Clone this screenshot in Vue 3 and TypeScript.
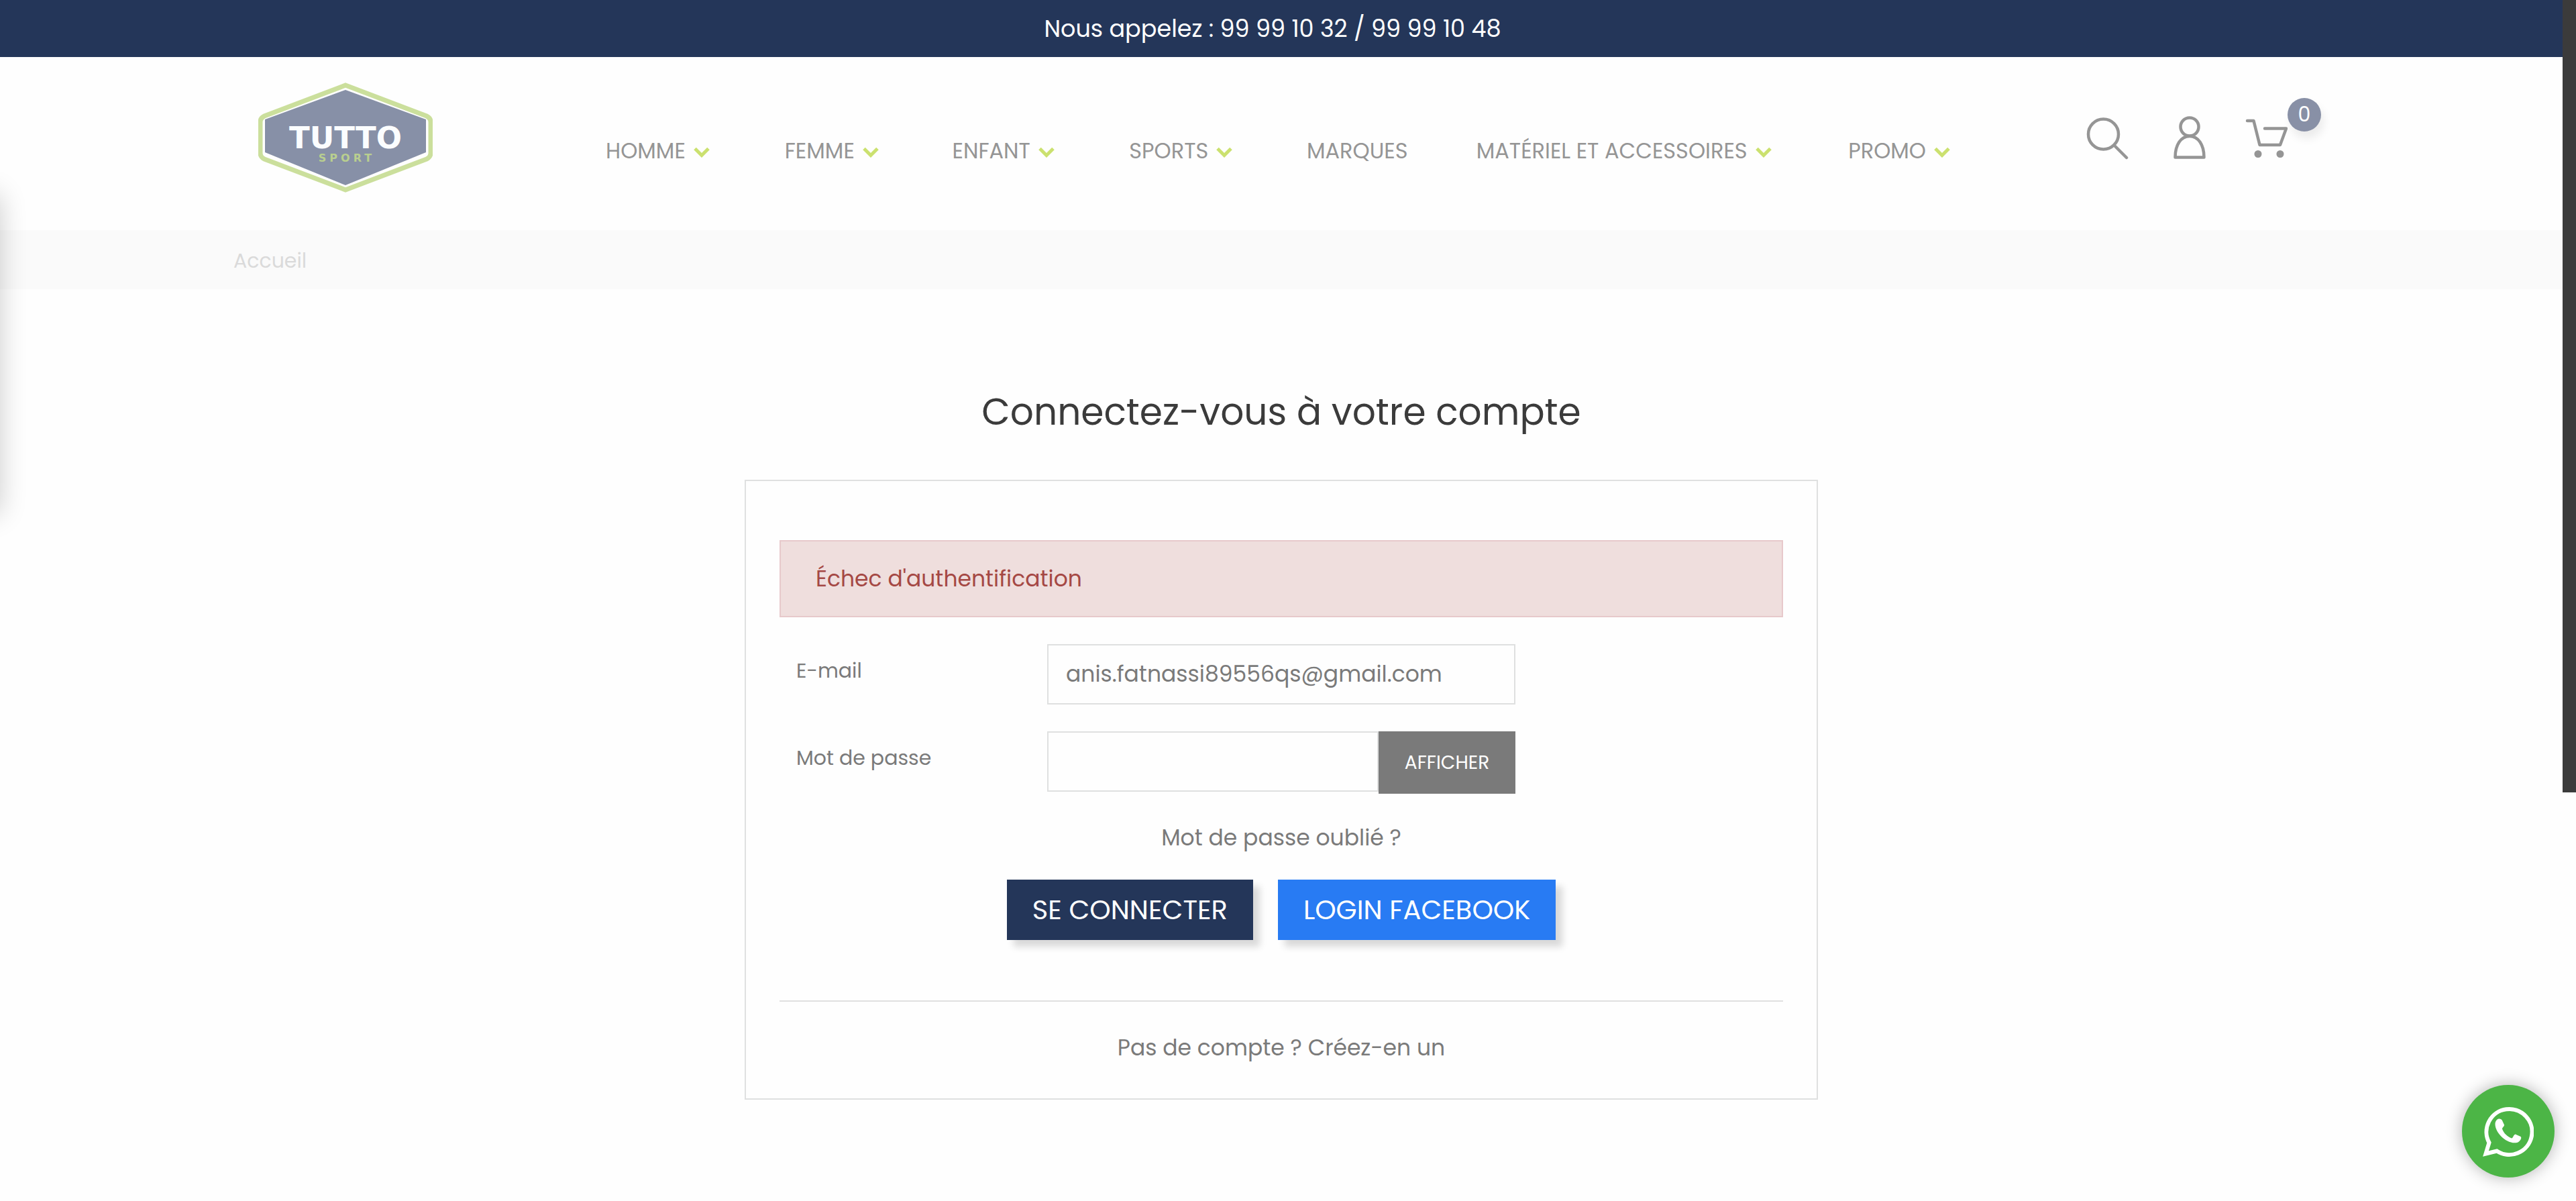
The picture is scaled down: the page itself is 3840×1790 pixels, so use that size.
<script setup lang="ts">
import { ref } from 'vue'

interface NavItem {
  label: string
  hasMenu: boolean
}

const navItems: NavItem[] = [
  { label: 'HOMME', hasMenu: true },
  { label: 'FEMME', hasMenu: true },
  { label: 'ENFANT', hasMenu: true },
  { label: 'SPORTS', hasMenu: true },
  { label: 'MARQUES', hasMenu: false },
  { label: 'MATÉRIEL ET ACCESSOIRES', hasMenu: true },
  { label: 'PROMO', hasMenu: true },
]

const email = ref('anis.fatnassi89556qs@gmail.com')
const password = ref('')
const passwordVisible = ref(false)
const cartCount = ref(0)
</script>

<template>
  <div class="page">
    <div class="topbar">Nous appelez : 99 99 10 32 / 99 99 10 48</div>

    <header class="header">
      <div class="container header-inner">
        <a href="#" class="logo" aria-label="Tutto Sport">
          <svg viewBox="0 0 260 164">
            <path d="M130 4 L251 50 Q257 53 257 59 V105 Q257 111 251 114 L130 160 L9 114 Q3 111 3 105 V59 Q3 53 9 50 Z" fill="#fefefe" stroke="#cbdf9c" stroke-width="7" />
            <path d="M130 11 L250 55 V104 L130 153 L10 104 V55 Z" fill="#8790a7" />
            <text x="130" y="98" class="logo-name">TUTTO</text>
            <text x="132" y="118" class="logo-sub">SPORT</text>
          </svg>
        </a>

        <nav class="nav">
          <a v-for="item in navItems" :key="item.label" href="#" class="nav-link">
            {{ item.label }}
            <svg v-if="item.hasMenu" class="chevron" viewBox="0 0 24 16">
              <path d="M2 2.500 L12 12.500 L22 2.500" />
            </svg>
          </a>
        </nav>

        <div class="tools">
          <button type="button" class="tool" aria-label="Rechercher">
            <svg viewBox="0 0 64 66">
              <circle cx="25.500" cy="28" r="22.500" />
              <path d="M41.500 44.500 L60 63" />
            </svg>
          </button>
          <button type="button" class="tool" aria-label="Mon compte">
            <svg viewBox="0 0 64 66">
              <circle cx="36" cy="17" r="13.500" />
              <path d="M14.500 62.500 C14.500 44 23 31 36 31 C49 31 57.500 44 57.500 62.500 Z" />
            </svg>
          </button>
          <button type="button" class="tool" aria-label="Panier">
            <svg viewBox="0 0 64 66">
              <path d="M4 8 H13.500 L22.500 44 H53 L62 19.500 H30" />
              <circle class="wheel" cx="20" cy="57.500" r="5.500" />
              <circle class="wheel" cx="53" cy="57.500" r="5.500" />
            </svg>
            <span class="badge">{{ cartCount }}</span>
          </button>
        </div>
      </div>
    </header>

    <div class="breadcrumb">
      <div class="container"><a href="#">Accueil</a></div>
    </div>

    <main class="main">
      <h1 class="title">Connectez-vous à votre compte</h1>
      <section class="card">
        <div class="alert" role="alert">Échec d'authentification</div>
        <form @submit.prevent>
          <div class="row">
            <label for="email">E-mail</label>
            <div class="field">
              <input id="email" v-model="email" type="email" />
            </div>
          </div>
          <div class="row">
            <label for="password">Mot de passe</label>
            <div class="field">
              <input id="password" v-model="password" :type="passwordVisible ? 'text' : 'password'" />
              <button type="button" class="reveal" @click="passwordVisible = !passwordVisible">AFFICHER</button>
            </div>
          </div>
          <p class="forgot"><a href="#">Mot de passe oublié ?</a></p>
          <div class="actions">
            <button type="submit" class="btn btn-primary">SE CONNECTER</button>
            <button type="button" class="btn btn-facebook">LOGIN FACEBOOK</button>
          </div>
        </form>
        <hr class="rule" />
        <p class="register"><a href="#">Pas de compte ? Créez-en un</a></p>
      </section>
    </main>

    <div class="drawer-edge"></div>
    <div class="scroll-thumb"></div>

    <a href="#" class="whatsapp" aria-label="WhatsApp">
      <svg viewBox="0 0 76 76">
        <path class="bubble" d="M9.500 55 A34 34 0 1 1 21 67.500 L4.500 71.500 Z" />
        <path class="phone" d="M21 21 C24 18.500 28 19.500 29 22 L32 28.500 C32.500 30.500 29 32.500 29 34.500 C31 41 37 46 43 48.500 C45 48.500 46 43 48.500 42.500 L56.500 46 C59 48 55 54 51 55 C36 58 18 40 18.500 27 C18.500 24.500 19.500 22.500 21 21 Z" />
      </svg>
    </a>
  </div>
</template>

<style>
body {
  margin: 0;
  background: #fefefe;
}
</style>

<style scoped>
.page {
  box-sizing: border-box;
  min-height: 100vh;
  padding-right: 20px;
  overflow: hidden;
  background: #fefefe;
  color: #7a7a7a;
  font-family: Poppins, Inter, "Liberation Sans", sans-serif;
  font-size: 33px;
  font-weight: 400;
  line-height: 40px;
}

.page * {
  box-sizing: border-box;
}

a {
  color: inherit;
  text-decoration: none;
}

button,
input {
  margin: 0;
  border: 0;
  border-radius: 0;
  font: inherit;
}

button {
  padding: 0;
  cursor: pointer;
}

.container {
  width: 90%;
  max-width: 3124px;
  margin: 0 auto;
}

.topbar {
  height: 85px;
  padding-right: 26px;
  background: #243659;
  color: #fff;
  font-size: 35px;
  line-height: 85px;
  text-align: center;
}

.header-inner {
  display: flex;
  align-items: center;
  height: 258px;
  padding: 0 62px 19px 37px;
}

.logo {
  display: block;
  flex: none;
  width: 260px;
  margin-right: 258px;
}

.logo svg {
  display: block;
  width: 100%;
}

.logo-name {
  fill: #fbfdff;
  font: bold 45px "DejaVu Sans", sans-serif;
  text-anchor: middle;
}

.logo-sub {
  fill: #b9cf8f;
  font: bold 16px "DejaVu Sans", sans-serif;
  letter-spacing: 5px;
  text-anchor: middle;
}

.nav {
  display: grid;
  flex: 0 1 2004px;
  grid-template-columns: 267fr 250fr 264fr 265fr 253fr 555fr 150fr;
  padding-top: 40px;
  color: #959595;
}

.nav-link {
  display: flex;
  align-items: center;
  gap: 12px;
  font-size: 32px;
  white-space: nowrap;
}

.chevron {
  width: 24px;
  height: 16px;
  margin-top: 4px;
  fill: none;
  stroke: #cbe16f;
  stroke-width: 5;
}

.tools {
  display: flex;
  gap: 54px;
  margin-left: auto;
}

.tool {
  position: relative;
  width: 64px;
  height: 66px;
  background: none;
}

.tool svg {
  display: block;
  width: 64px;
  height: 66px;
  fill: none;
  stroke: #959595;
  stroke-width: 4.5;
  stroke-linecap: round;
  stroke-linejoin: round;
}

.tool .wheel {
  fill: #959595;
  stroke: none;
}

.badge {
  position: absolute;
  top: -26px;
  left: 64px;
  width: 50px;
  height: 50px;
  border-radius: 50%;
  background: #8890a6;
  box-shadow: 4px 10px 14px rgba(0, 0, 0, 0.08);
  color: #fff;
  font-size: 30px;
  line-height: 50px;
  text-align: center;
}

.breadcrumb {
  padding: 26px 0 22px;
  background: #fafafa;
  color: #dadada;
  font-size: 30px;
}

.main {
  padding: 143px 40px 60px;
}

.title {
  margin: 0 0 61px;
  color: #3b3b3b;
  font-size: 55px;
  font-weight: 400;
  line-height: 80px;
  text-align: center;
}

.card {
  max-width: 1600px;
  margin: 0 auto;
  padding: 88px 50px 55px;
  border: 2px solid #dfe0e0;
}

.alert {
  margin-bottom: 40px;
  padding: 36px 52px 35px;
  border: 2px solid #e7c9cb;
  background: #efdedd;
  color: #a54844;
}

.row {
  display: grid;
  grid-template-columns: minmax(0, 1fr) minmax(0, 2fr) minmax(0, 1fr);
  margin-bottom: 40px;
}

.row label {
  padding: 20px 25px 0;
  font-size: 30px;
}

.field {
  display: flex;
  align-items: flex-start;
  margin: 0 25px;
}

.field input {
  flex: 1;
  min-width: 0;
  height: 90px;
  padding: 0 26px;
  border: 2px solid #dfe0e0;
  outline: 0;
  background: #fefefe;
  color: #7a7a7a;
}

.reveal {
  width: 204px;
  height: 93px;
  background: #7a7a7a;
  color: #fff;
  font-size: 28px;
}

.forgot {
  margin: 46px 0 42px;
  text-align: center;
}

.actions {
  display: flex;
  justify-content: center;
  gap: 37px;
}

.btn {
  height: 90px;
  padding: 0 38px;
  box-shadow: 10px 10px 10px rgba(0, 0, 0, 0.15);
  color: #fff;
  font-size: 40px;
}

.btn-primary {
  background: #243659;
}

.btn-facebook {
  background: #287bf3;
}

.rule {
  height: 2px;
  margin: 90px 0 49px;
  border: 0;
  background: #e0e0e0;
}

.register {
  margin: 0;
  text-align: center;
}

/* Closed side drawer: only its shadow reaches into the window */
.drawer-edge {
  position: fixed;
  top: 290px;
  left: -100px;
  width: 100px;
  height: 476px;
  box-shadow: 0 0 40px rgba(0, 0, 0, 0.2);
}

.scroll-thumb {
  position: fixed;
  top: 0;
  right: 0;
  width: 20px;
  height: 66%;
  background: #3b3b3b;
}

.whatsapp {
  position: fixed;
  right: 32px;
  bottom: 35px;
  display: flex;
  align-items: center;
  justify-content: center;
  width: 138px;
  height: 138px;
  border-radius: 50%;
  background: #4cb546;
  box-shadow: 0 0 24px rgba(0, 0, 0, 0.3);
}

.whatsapp svg {
  width: 76px;
  height: 76px;
}

.bubble {
  fill: none;
  stroke: #fff;
  stroke-width: 6;
}

.phone {
  fill: #fff;
}
</style>
